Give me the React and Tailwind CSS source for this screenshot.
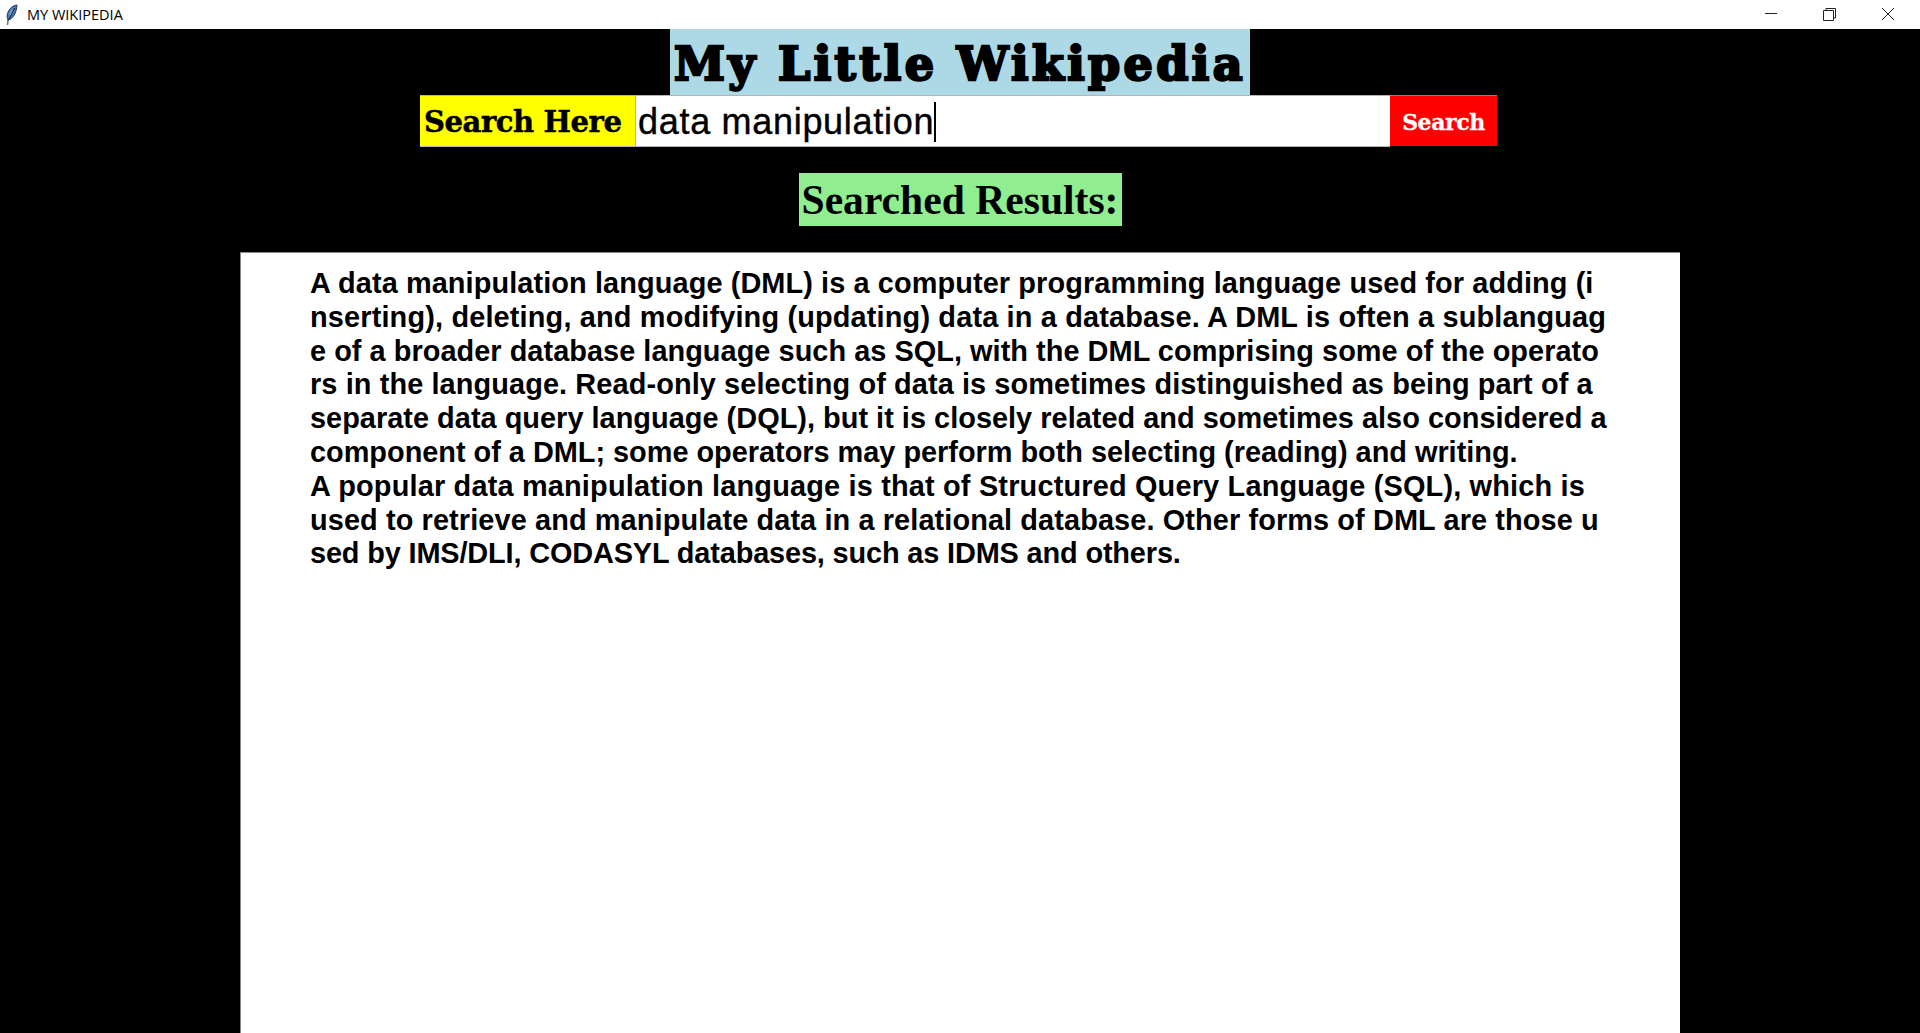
const lines = [
  ["A data manipulation language (DML) is a computer programming language used for adding (i", "tracking-[0.096px]"],
  ["nserting), deleting, and modifying (updating) data in a database. A DML is often a sublanguag", "tracking-[0.158px]"],
  ["e of a broader database language such as SQL, with the DML comprising some of the operato", "tracking-[0.04px]"],
  ["rs in the language. Read-only selecting of data is sometimes distinguished as being part of a", "tracking-[0.104px]"],
  ["separate data query language (DQL), but it is closely related and sometimes also considered a", "tracking-[0.026px]"],
  ["component of a DML; some operators may perform both selecting (reading) and writing.", "tracking-[-0.014px]"],
  ["A popular data manipulation language is that of Structured Query Language (SQL), which is", "tracking-[0.18px]"],
  ["used to retrieve and manipulate data in a relational database. Other forms of DML are those u", "tracking-[0.105px]"],
  ["sed by IMS/DLI, CODASYL databases, such as IDMS and others.", "tracking-[-0.145px]"],
];

function Feather() {
  return (
    <svg width="14" height="22" viewBox="0 0 14 22">
      <path d="M13 1 C8 1.5 3.5 6 3 12.5 L4 16 C9 15 12.5 9 13 1 Z" fill="#4a7fc4" stroke="#2a3a55" strokeWidth="1" />
      <path d="M8 6 L6 11 M10.5 5 L8 10" stroke="#a9c6ea" strokeWidth="0.8" fill="none" />
      <path d="M11 4 L4 17" stroke="#1d2735" strokeWidth="1.1" fill="none" />
      <path d="M4 16 L3.5 21" stroke="#777" strokeWidth="1.6" fill="none" />
    </svg>
  );
}

export default function App() {
  return (
    <div className="h-[1033px] w-[1920px] overflow-hidden bg-black flex flex-col font-['Liberation_Sans',sans-serif]">
      <div className="h-[29px] bg-white flex items-center shrink-0">
        <div className="ml-[4px] w-[14px] flex"><Feather /></div>
        <span className="ml-[9px] text-[14.5px] text-black font-['Open_Sans','Liberation_Sans',sans-serif]">MY WIKIPEDIA</span>
        <div className="ml-auto flex items-center text-black">
          <svg width="58" height="29" viewBox="0 0 58 29"><path d="M22 13.5 H34" stroke="#222" strokeWidth="1" /></svg>
          <svg width="58" height="29" viewBox="0 0 58 29" fill="none" stroke="#222" strokeWidth="1"><path d="M22.5 10.5 H32.5 V20.5 H22.5 Z M25 10 V8.5 H34.5 V18 H33" /></svg>
          <svg width="58" height="29" viewBox="0 0 58 29" stroke="#222" strokeWidth="1"><path d="M23 8 L35 20 M35 8 L23 20" /></svg>
          <div className="w-[3px]" />
        </div>
      </div>

      <div className="flex justify-center h-[66px] shrink-0">
        <div className="w-[580px] bg-[#add8e6] flex items-center justify-center pt-[4px] text-black text-[46px] font-bold tracking-[3.4px] [-webkit-text-stroke:2.5px_black] whitespace-nowrap font-['DejaVu_Serif',serif]">
          My Little Wikipedia
        </div>
      </div>

      <div className="flex h-[52px] ml-[420px] shrink-0">
        <div className="w-[216px] bg-[#ffff00] border-y border-r border-[#b5b5b5] flex items-center pl-[4px] pt-[3px] text-[29px] font-bold text-black whitespace-nowrap font-['DejaVu_Serif',serif] tracking-[-0.4px] [-webkit-text-stroke:0.5px_black]">Search Here</div>
        <div className="w-[754px] bg-white border-y border-[#b5b5b5] flex items-center pt-[1px] text-[36px] tracking-[0.7px] text-black pl-[2px] whitespace-nowrap [-webkit-text-stroke:0.4px_black]">
          <span>data manipulation</span><span className="w-[2px] h-[40px] bg-black" />
        </div>
        <div className="w-[107px] h-[51px] bg-[#ff0000] border-t border-[#ff5050] flex items-center justify-center pt-[3px] text-[22px] font-bold text-white whitespace-nowrap font-['DejaVu_Serif',serif] tracking-[-0.4px] [-webkit-text-stroke:0.3px_white]">Search</div>
      </div>

      <div className="flex justify-center mt-[26px] shrink-0">
        <div className="w-[323px] h-[53px] bg-[#90ee90] flex items-center justify-center pt-[2px] text-[41.6px] font-bold text-black whitespace-nowrap font-['Liberation_Serif',serif]">Searched Results:</div>
      </div>

      <div className="mt-[26px] ml-[240px] w-[1440px] flex-1 bg-white border-t border-l border-[#8a8a8a] pl-[69px] pt-[14px] text-[28.9px] leading-[33.8px] font-bold text-black">
        {lines.map(([l, t], i) => (
          <div key={i} className={"whitespace-nowrap " + t}>{l}</div>
        ))}
      </div>
    </div>
  );
}
